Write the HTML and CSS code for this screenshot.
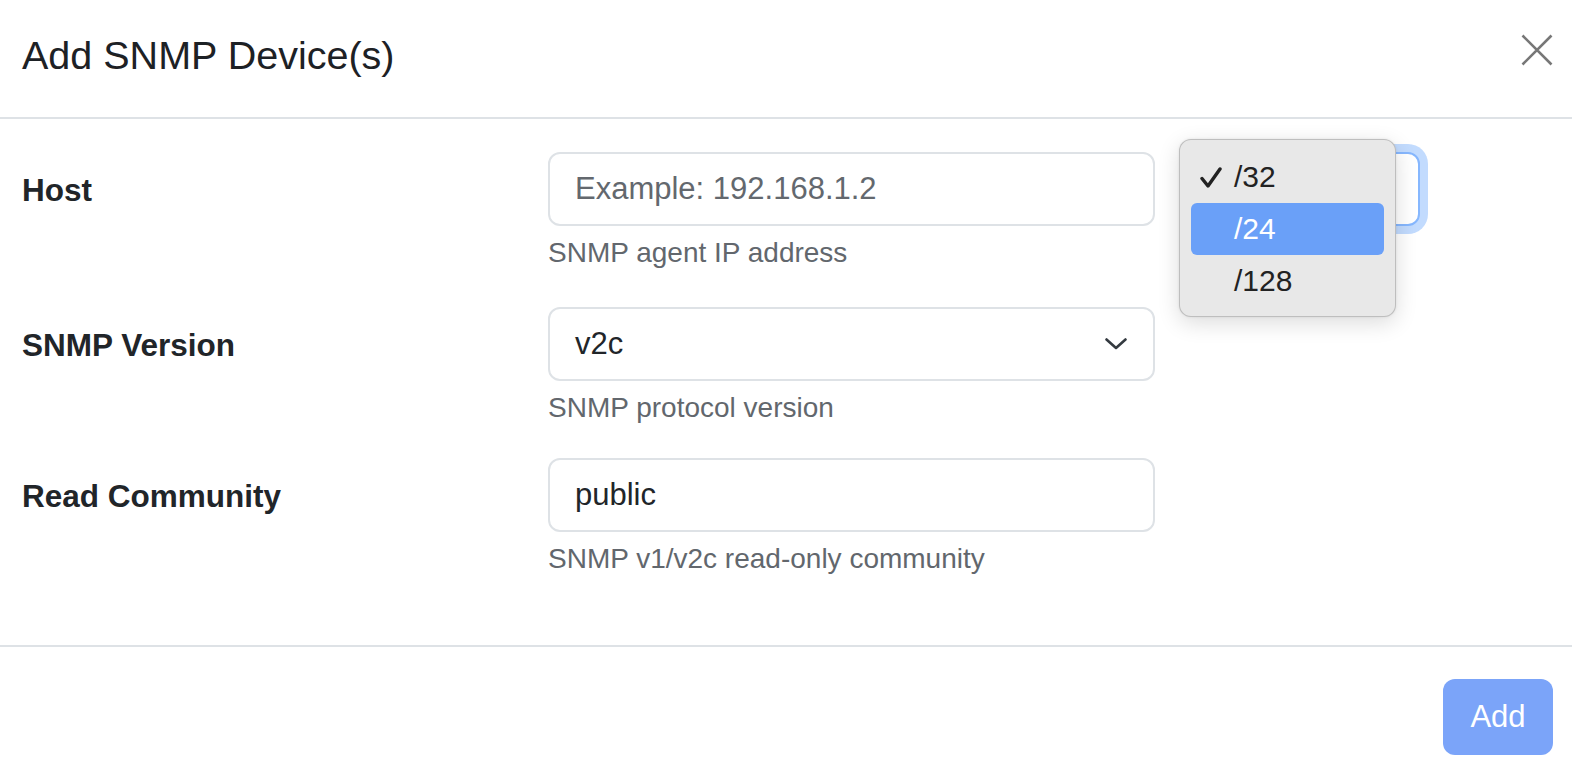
FILE: index.html
```html
<!DOCTYPE html>
<html lang="en">
<head>
<meta charset="utf-8">
<title>Add SNMP Device(s)</title>
<link rel="stylesheet" href="styles.css">
</head>
<body>
<div class="modal">
  <header class="modal-header">
    <h5 class="modal-title">Add SNMP Device(s)</h5>
    <button class="btn-close" type="button" aria-label="Close">
      <svg width="32" height="32" viewBox="0 0 32 32"><path d="M1.5 1.5 L30.5 30.5 M30.5 1.5 L1.5 30.5" stroke="#777" stroke-width="2.6" fill="none"/></svg>
    </button>
  </header>

  <div class="modal-body">
    <div class="form-row row-host">
      <label class="form-label">Host</label>
      <div class="field">
        <input class="form-control" type="text" placeholder="Example: 192.168.1.2">
        <div class="form-text">SNMP agent IP address</div>
      </div>
      <div class="prefix-col">
        <div class="form-select focused" aria-label="Prefix length"></div>
      </div>
    </div>

    <div class="form-row row-version">
      <label class="form-label">SNMP Version</label>
      <div class="field">
        <div class="form-control select-like">
          <span>v2c</span>
          <svg class="chevron" width="22" height="12" viewBox="0 0 22 12"><path d="M1.5 1.5 L11 10 L20.5 1.5" stroke="#343a40" stroke-width="2.6" fill="none" stroke-linecap="round" stroke-linejoin="round"/></svg>
        </div>
        <div class="form-text">SNMP protocol version</div>
      </div>
    </div>

    <div class="form-row row-community">
      <label class="form-label">Read Community</label>
      <div class="field">
        <input class="form-control" type="text" value="public">
        <div class="form-text">SNMP v1/v2c read-only community</div>
      </div>
    </div>

    <div class="menu">
      <div class="menu-item">
        <svg class="check" width="22" height="21" viewBox="0 0 22 21"><path d="M2 11.5 L8 19 L20 2" stroke="#222" stroke-width="3.4" fill="none" stroke-linecap="round" stroke-linejoin="round"/></svg>
        <span>/32</span>
      </div>
      <div class="menu-item active"><span>/24</span></div>
      <div class="menu-item"><span>/128</span></div>
    </div>
  </div>

  <footer class="modal-footer">
    <button class="btn-primary" type="button" disabled>Add</button>
  </footer>
</div>
</body>
</html>
```
FILE: styles.css
```css
html, body {
  margin: 0;
  padding: 0;
  background: #fff;
}
body {
  font-family: "Liberation Sans", Arial, Helvetica, sans-serif;
  color: #212529;
  width: 1572px;
  height: 772px;
  overflow: hidden;
}
.modal {
  display: flex;
  flex-direction: column;
}
.modal-header {
  height: 119px;
  box-sizing: border-box;
  border-bottom: 2px solid #dee2e6;
  display: flex;
  justify-content: space-between;
  align-items: flex-start;
  padding: 26px 19px 0 22px;
}
.modal-title {
  margin: 0;
  font-size: 39.5px;
  line-height: 58.5px;
  font-weight: 400;
  color: #1d2125;
}
.btn-close {
  border: 0;
  background: transparent;
  padding: 0;
  margin-top: 8px;
  width: 32px;
  height: 32px;
  display: block;
}
.btn-close svg { display: block; }

.modal-body {
  position: relative;
  padding: 33px 0 0 22px;
  height: 526px;
  box-sizing: border-box;
}
.form-row {
  display: grid;
  grid-template-columns: 479px 607px 218px;
  column-gap: 47px;
  align-items: start;
}
.row-host { margin-bottom: 34px; }
.row-version { margin-bottom: 30px; }

.form-label {
  font-weight: 700;
  font-size: 31.5px;
  line-height: 47px;
  padding-top: 15px;
}
.field {
  display: flex;
  flex-direction: column;
}
.form-control {
  box-sizing: border-box;
  width: 100%;
  height: 74px;
  border: 2px solid #dee2e6;
  border-radius: 12px;
  padding: 0 25px 0 25px;
  font-family: inherit;
  font-size: 31px;
  color: #212529;
  background: #fff;
  outline: none;
  margin: 0;
}
.form-control::placeholder {
  color: #63686e;
  opacity: 1;
}
.select-like {
  display: flex;
  align-items: center;
  justify-content: space-between;
}
.select-like .chevron { display: block; margin-right: 1px; }
.form-text {
  margin-top: 7px;
  font-size: 28px;
  line-height: 40px;
  color: #62676d;
}
.prefix-col { display: block; }
.form-select {
  box-sizing: border-box;
  height: 74px;
  border: 2px solid #86b7fe;
  border-radius: 12px;
  box-shadow: 0 0 0 8px rgba(13, 110, 253, 0.25);
  background: #fff;
}

.menu {
  position: absolute;
  left: 1179px;
  top: 20px;
  width: 217px;
  height: 178px;
  box-sizing: border-box;
  padding: 11px;
  background: #e8e8e8;
  border: 1px solid rgba(0, 0, 0, 0.18);
  border-radius: 12px;
  box-shadow: 0 6px 22px rgba(0, 0, 0, 0.14), 0 0 3px rgba(0, 0, 0, 0.08);
  display: flex;
  flex-direction: column;
}
.menu-item {
  height: 52px;
  flex: 0 0 52px;
  border-radius: 6px;
  display: flex;
  align-items: center;
  padding-left: 43px;
  position: relative;
  font-size: 30px;
  color: #222;
}
.menu-item .check {
  position: absolute;
  left: 9px;
  top: 16px;
}
.menu-item.active {
  background: #6aa0f8;
  color: #fff;
}

.modal-footer {
  border-top: 2px solid #dee2e6;
  height: 127px;
  box-sizing: border-box;
  display: flex;
  justify-content: flex-end;
  align-items: flex-start;
  padding: 32px 19px 0 0;
}
.btn-primary {
  width: 110px;
  height: 76px;
  border: 0;
  border-radius: 12px;
  background: #7ba4f9;
  color: #fff;
  font-family: inherit;
  font-size: 31px;
  padding: 0;
}
```
